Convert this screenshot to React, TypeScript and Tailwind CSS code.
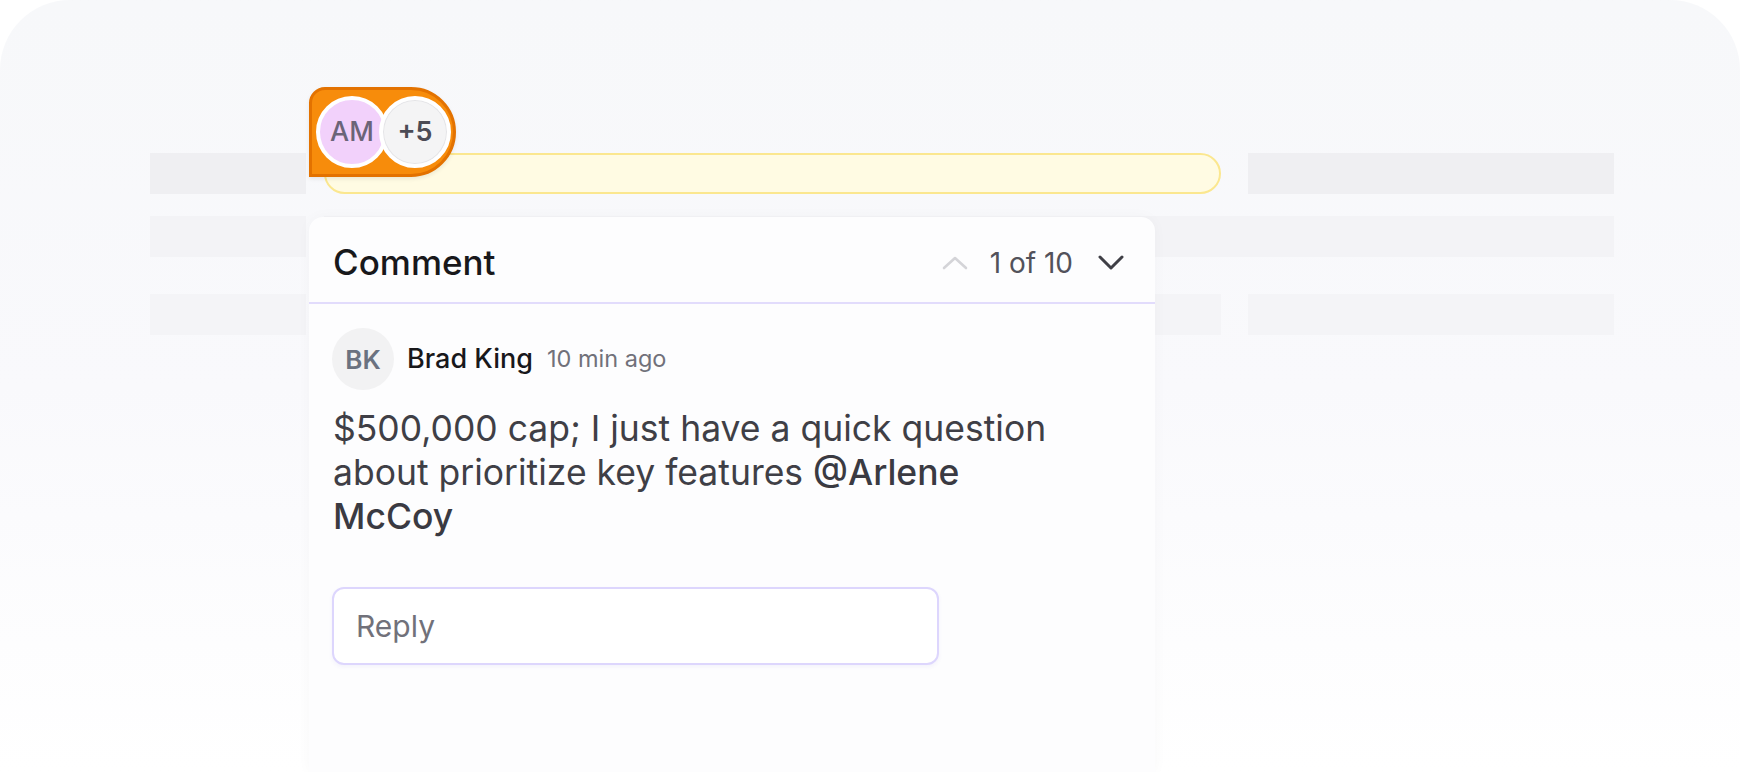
import React from "react";

function ChevronUpIcon() {
  return (
    <svg width="26" height="14" viewBox="0 0 26 14" fill="none">
      <polyline points="2,12 13,2 24,12" stroke="#d4d4d8" strokeWidth="2.6" strokeLinecap="round" strokeLinejoin="round" />
    </svg>
  );
}

function ChevronDownIcon() {
  return (
    <svg width="26" height="15" viewBox="0 0 26 15" fill="none">
      <polyline points="2,2 13,13 24,2" stroke="#3f3f46" strokeWidth="3" strokeLinecap="round" strokeLinejoin="round" />
    </svg>
  );
}

export default function App() {
  return (
    <div className="w-[1740px] h-[772px] overflow-hidden bg-white font-['Inter','Noto_Sans',sans-serif]">
      <div className="relative h-full rounded-t-[70px] bg-gradient-to-b from-[#f7f8fa] via-[#f9f9fc] to-white pl-[150px] pr-[126px] pt-[153px]">
        {/* skeleton rows */}
        <div className="flex flex-col">
          <div className="flex h-[41px] items-stretch">
            <div className="w-[156px] bg-[#efeff2]" />
            <div className="ml-[18px] w-[897px] rounded-full border-2 border-[#fbe78f] bg-[#fffbe3]" />
            <div className="ml-[27px] flex-1 bg-[#efeff2]" />
          </div>
          <div className="mt-[22px] flex h-[41px] items-stretch">
            <div className="w-[156px] bg-[#f3f3f6]" />
            <div className="ml-[18px] flex-1 bg-[#f3f3f6]" />
          </div>
          <div className="mt-[37px] flex h-[41px] items-stretch">
            <div className="w-[156px] bg-[#f4f4f7]" />
            <div className="ml-[18px] w-[897px] bg-[#f4f4f7]" />
            <div className="ml-[27px] flex-1 bg-[#f4f4f7]" />
          </div>
        </div>

        {/* marker badge */}
        <div className="absolute left-[309px] top-[87px] flex h-[90px] w-[147px] items-center rounded-tl-[16px] rounded-tr-[45px] rounded-br-[45px] rounded-bl-none border-[3px] border-[#e37200] bg-[#f78c0b] pl-[4px] shadow-[0_2px_4px_rgba(0,0,0,0.08)]">
          <div className="flex h-[72px] w-[72px] items-center justify-center rounded-full border-[4px] border-white bg-[#f2d1fb] text-[27px] font-medium text-[#6b6478]">
            AM
          </div>
          <div className="-ml-[9px] flex h-[72px] w-[72px] items-center justify-center rounded-full border-[4px] border-white bg-[#f4f4f5] text-[27px] font-semibold text-[#4b4b55] shadow-[inset_0_0_0_1px_#e4e4e7]">
            +5
          </div>
        </div>

        {/* comment card */}
        <div className="absolute bottom-0 left-[309px] top-[217px] w-[846px] rounded-t-[14px] bg-[#fdfdfe] shadow-[0_0_14px_rgba(30,30,60,0.03)]">
          <div className="flex h-[87px] items-center justify-between border-b-2 border-[#e2dcfc] pl-[24px] pr-[31px] pt-[6px]">
            <span className="text-[35px] font-medium leading-none text-[#18181b]">Comment</span>
            <div className="flex items-center">
              <ChevronUpIcon />
              <span className="ml-[22px] text-[28px] leading-none text-[#52525b]">1 of 10</span>
              <span className="ml-[25px] flex"><ChevronDownIcon /></span>
            </div>
          </div>

          <div className="pl-[23px] pt-[24px]">
            <div className="flex items-center">
              <div className="flex h-[62px] w-[62px] items-center justify-center rounded-full bg-[#f2f2f3] text-[26px] font-semibold text-[#6b7280]">
                BK
              </div>
              <span className="ml-[13px] text-[27px] font-medium text-[#18181b]">Brad King</span>
              <span className="ml-[14px] text-[23.5px] text-[#71717a]">10 min ago</span>
            </div>

            <p className="mt-[17px] whitespace-nowrap pl-[1px] text-[35.5px] leading-[44px] text-[#3f3f46]">
              $500,000 cap; I just have a quick question
              <br />
              about prioritize key features <span className="font-medium text-[#3a3a42]">@Arlene</span>
              <br />
              <span className="font-medium text-[#3a3a42]">McCoy</span>
            </p>

            <div className="mt-[48px] flex h-[78px] w-[607px] items-center rounded-[12px] border-2 border-[#ddd6fd] bg-white pl-[22px] shadow-[0_2px_4px_rgba(80,60,200,0.06)]">
              <span className="text-[30px] text-[#71717a]">Reply</span>
            </div>
          </div>
        </div>
      </div>
    </div>
  );
}
